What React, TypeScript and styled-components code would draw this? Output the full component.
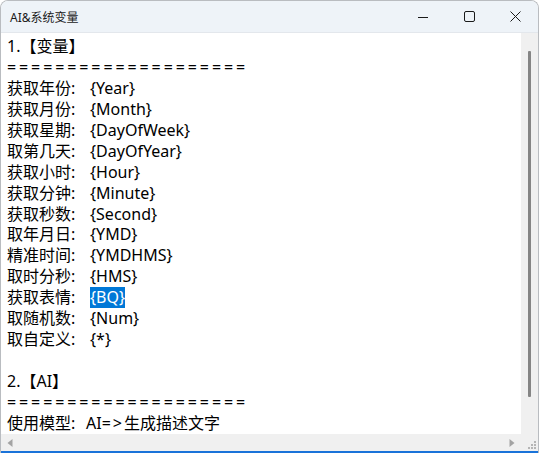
import React from 'react';
import styled, { createGlobalStyle } from 'styled-components';

const GlobalStyle = createGlobalStyle`
  html, body {
    margin: 0;
    padding: 0;
    background: #ffffff;
  }
  body {
    font-family: "Noto Sans", "Noto Sans CJK SC", sans-serif;
  }
`;

const Window = styled.div`
  width: 539px;
  height: 453px;
  box-sizing: border-box;
  display: flex;
  flex-direction: column;
  border: 1px solid #b9bcc0;
  border-bottom: none;
  border-radius: 8px 8px 0 0;
  overflow: hidden;
  background: #ffffff;
`;

const TitleBar = styled.div`
  height: 31px;
  flex: none;
  display: flex;
  align-items: center;
  background: #eef3f8;
  border-bottom: 1px solid #e3e7ec;
`;

const Title = styled.div`
  flex: 1;
  padding-left: 9px;
  font-size: 12px;
  color: #1a1a1a;
  font-family: "Noto Sans", "Noto Sans CJK SC", sans-serif;
`;

const CtrlButton = styled.div`
  width: 46px;
  height: 31px;
  display: flex;
  align-items: center;
  justify-content: center;
  color: #1a1a1a;
`;

const Body = styled.div`
  flex: 1;
  display: flex;
  min-height: 0;
`;

const Editor = styled.div`
  flex: 1;
  padding: 3px 0 0 6px;
  font-size: 16px;
  line-height: 20.94px;
  color: #000000;
  white-space: pre;
  overflow: hidden;
`;

const Line = styled.div`
  height: 20.94px;
  display: flex;
`;

const Label = styled.span<{ $w?: number }>`
  width: ${(p) => p.$w ?? 83}px;
  flex: none;
`;

const Value = styled.span<{ $selected?: boolean }>`
  background: ${(p) => (p.$selected ? '#0078d7' : 'transparent')};
  color: ${(p) => (p.$selected ? '#ffffff' : '#000000')};
`;

const Rule = styled.span`
  letter-spacing: 2.9px;
`;

const Arrow = styled.span`
  letter-spacing: 2px;
`;

const VScroll = styled.div`
  width: 17px;
  flex: none;
  background: #f0f0f0;
  display: flex;
  justify-content: center;
  padding-top: 18px;
  box-sizing: border-box;
`;

const VThumb = styled.div`
  width: 3px;
  height: 346px;
  background: #858585;
  border-radius: 1px;
`;

const HScroll = styled.div`
  height: 17px;
  flex: none;
  display: flex;
  align-items: center;
  background: #f0f0f0;
`;

const HTrack = styled.div`
  flex: 1;
  display: flex;
  align-items: center;
  justify-content: space-between;
  padding: 0 6px 0 6px;
`;

const Corner = styled.div`
  width: 17px;
  height: 17px;
  flex: none;
  display: flex;
  align-items: flex-end;
  justify-content: flex-end;
`;

const BottomEdge = styled.div`
  height: 2px;
  flex: none;
  background: #1a73d9;
`;

const vars: [string, string][] = [
  ['获取年份:', '{Year}'],
  ['获取月份:', '{Month}'],
  ['获取星期:', '{DayOfWeek}'],
  ['取第几天:', '{DayOfYear}'],
  ['获取小时:', '{Hour}'],
  ['获取分钟:', '{Minute}'],
  ['获取秒数:', '{Second}'],
  ['取年月日:', '{YMD}'],
  ['精准时间:', '{YMDHMS}'],
  ['取时分秒:', '{HMS}'],
  ['获取表情:', '{BQ}'],
  ['取随机数:', '{Num}'],
  ['取自定义:', '{*}'],
];

const RULE = '====================';

const App = () => {
  return (
    <>
      <GlobalStyle />
      <Window>
        <TitleBar>
          <Title>AI&amp;系统变量</Title>
          <CtrlButton>
            <svg width="10" height="10" viewBox="0 0 10 10">
              <path d="M0 5.5h10" stroke="#1a1a1a" strokeWidth="1" />
            </svg>
          </CtrlButton>
          <CtrlButton>
            <svg width="11" height="11" viewBox="0 0 11 11">
              <rect x="0.5" y="0.5" width="10" height="10" rx="1.5" fill="none" stroke="#1a1a1a" strokeWidth="1" />
            </svg>
          </CtrlButton>
          <CtrlButton>
            <svg width="11" height="11" viewBox="0 0 11 11">
              <path d="M0.5 0.5l10 10M10.5 0.5l-10 10" stroke="#1a1a1a" strokeWidth="1" />
            </svg>
          </CtrlButton>
        </TitleBar>
        <Body>
          <Editor>
            <Line>1.【变量】</Line>
            <Line>
              <Rule>{RULE}</Rule>
            </Line>
            {vars.map(([label, value]) => (
              <Line key={label}>
                <Label>{label}</Label>
                <Value $selected={value === '{BQ}'}>{value}</Value>
              </Line>
            ))}
            <Line />
            <Line>2.【AI】</Line>
            <Line>
              <Rule>{RULE}</Rule>
            </Line>
            <Line>
              <Label $w={79}>使用模型:</Label>
              AI<Arrow>=&gt;</Arrow>生成描述文字
            </Line>
          </Editor>
          <VScroll>
            <VThumb />
          </VScroll>
        </Body>
        <HScroll>
          <HTrack>
            <svg width="6" height="8" viewBox="0 0 6 8">
              <path d="M5.5 0L0.5 4l5 4z" fill="#a3a3a3" />
            </svg>
            <svg width="6" height="8" viewBox="0 0 6 8">
              <path d="M0.5 0l5 4-5 4z" fill="#a3a3a3" />
            </svg>
          </HTrack>
          <Corner>
            <svg width="12" height="12" viewBox="0 0 12 12">
              <g fill="#b5b5b5">
                <rect x="8" y="2" width="2" height="2" />
                <rect x="5" y="5" width="2" height="2" />
                <rect x="8" y="5" width="2" height="2" />
                <rect x="2" y="8" width="2" height="2" />
                <rect x="5" y="8" width="2" height="2" />
                <rect x="8" y="8" width="2" height="2" />
              </g>
            </svg>
          </Corner>
        </HScroll>
        <BottomEdge />
      </Window>
    </>
  );
};

export default App;
